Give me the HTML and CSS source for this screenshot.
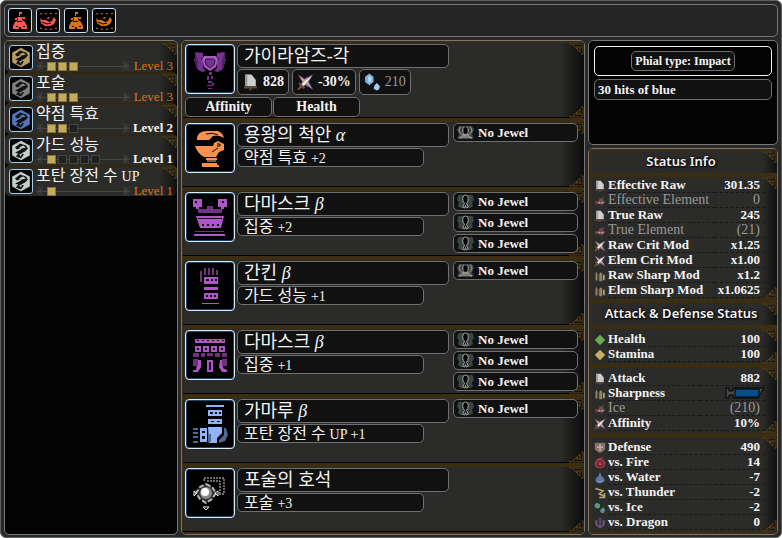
FILE: index.html
```html
<!DOCTYPE html>
<html lang="ko">
<head>
  <meta charset="UTF-8">
  <meta name="viewport" content="width=device-width, initial-scale=1.0">
  <title>Set Builder</title>
  <link rel="stylesheet" href="styles.css">
</head>
<body>
  <svg class="sprites" width="0" height="0" aria-hidden="true">
    <symbol id="demondrug" viewBox="0 0 22 22"><path d="M10 2h3v2h-2v2h-1zM8 7h6l-1 3 3 2 2 4v3H4v-3l2-4 3-2zM6 8h2v2H6zM14 7h2v2h-2z"/><path d="M7 16h2v1H7zM10 17h2v2h-2zM14 16h2v1h-2zM8 11h5v1H8z" fill="#000"/></symbol>
    <symbol id="powder" viewBox="0 0 22 22"><path d="M3 8l2 2h4l3 2 3-1 2-4 2 3-2 4-4 2H8l-4-3zM3 3h2l-1 2zM8 3h2L9 5zM13 3h2l-1 2zM18 3h2l-1 2zM3 19l1-2 1 2zM8 20l1-2 1 2zM13 20l1-2 1 2zM18 19l1-2 1 2zM9 8l4-1-1 2z"/><path d="M5 12l5 2 4-1" fill="none" stroke="#000"/></symbol>
    <symbol id="gem" viewBox="0 0 22 22"><path d="M11 1l9 5v10l-9 5-9-5V6z"/><path d="M5 8l5-4 6 2 2 3-3 3-4 2 3 1-3 4-5-2 2-3-3-1 6-3 1-2-5 2z" fill="#11110f"/><path d="M9 8l4-2 3 2-4 1zM9 15l3-1-1 3z"/><path d="M11 1l9 5v10l-9 5-9-5V6z" fill="none" stroke="#000" stroke-opacity=".4"/></symbol>
    <symbol id="cap" viewBox="0 0 8 10"><path d="M6 0v3H4V1L1 5l3 4V7h2v3M2 5h6M1 1h1M1 9h1" fill="none" stroke="#3e3f3c"/><path d="M5 3L2 5l3 2z" fill="#4a4b47"/></symbol>
    <symbol id="corner" viewBox="0 0 16 13"><path d="M1 1h14v10h-2M5 2l7 7V4H8l2 2M14 4h-2" fill="none" stroke="#5a4213"/></symbol>
    <symbol id="raw" viewBox="0 0 16 16"><path d="M3 1h6l4 5v6H3z" fill="#cccdcd"/><path d="M3 1h2v11H3z" fill="#949799"/><path d="M2 12h12v2H9v2H7v-2H2z" fill="#60483a"/></symbol>
    <symbol id="element" viewBox="0 0 16 16"><path d="M1 9l5-1 2-4 2 1 3-3-1 5 3 2-3 4-5 2-5-2z" fill="#724b4c"/><path d="M5 9l4 1 5-1-3 3-4 1z" fill="#b29998"/><path d="M1 11l5 1 5-1-3 4-5-1z" fill="#38272a"/></symbol>
    <symbol id="crit" viewBox="0 0 16 16"><path d="M1 1l6 4 8-4-4 7 4 7-7-4-7 4 4-7z" fill="#9676ac"/><path d="M3 3l4 3 5-2-2 4 3 4-5-3-4 2 2-3z" fill="#c5b779"/><path d="M14 2L6 12 4 10z" fill="#f1f0ee"/><path d="M2 9l5 5M1 15l4-4" stroke="#765039" stroke-width="2"/></symbol>
    <symbol id="sharp" viewBox="0 0 16 16"><path d="M2 5l2-3v12H2zM7 5l2-2 2 2v10H7z" fill="#958365"/><path d="M4 4l2 2v8H4zM12 6l2-1 1 2v7h-3z" fill="#5b503d"/><path d="M12 7h2v6h-2z" fill="#b9a98a"/></symbol>
    <symbol id="ice" viewBox="0 0 16 16"><path d="M5 0l4 3v5l-4 3-4-3V3z" fill="#7faddb"/><path d="M5 2l2 2v3l-2 2-1-2V4z" fill="#b9dbf7"/><path d="M12 9l3 3-1 3-2 1-3-2 1-3z" fill="#a2cef3"/></symbol>
    <symbol id="slot1" viewBox="0 0 20 16"><path d="M2 2q1-2 4-1h8q3-1 4 1l1 4-2 3 1 4-3 2H5l-3-2 1-4-2-3z" fill="#3b4442"/><path d="M10 1q-3 0-3 4 0 3 2 5l-2 4 2 1 1-3 1 3 2-1-2-4q2-2 2-5 0-4-3-4z" fill="#050505" stroke="#a7aaa3"/></symbol>
    <symbol id="slot4" viewBox="0 0 20 16"><path d="M3 1h14l2 4-2 5 2 4-3 1H4l-3-1 2-4-2-5z" fill="#454746"/><path d="M5 2Q1 6 6 10h8q5-4 1-8M8 2Q6 6 8 10M12 2q2 4 0 8" fill="none" stroke="#a0a19d"/><path d="M8 3h4v6H8z" fill="#070707"/><path d="M3 14l4-3h6l4 3-4-1H7z" fill="#777a77" stroke="#999"/></symbol>
  </svg>

  <div class="builder">
    <div class="buffs">
      <button class="buff red" aria-label="Demondrug"><svg><use href="#demondrug"/></svg></button>
      <button class="buff red" aria-label="Demon Powder"><svg><use href="#powder"/></svg></button>
      <button class="buff orange" aria-label="Armorskin"><svg><use href="#demondrug"/></svg></button>
      <button class="buff orange" aria-label="Hardshell Powder"><svg><use href="#powder"/></svg></button>
    </div>

    <div class="columns">
      <!-- Skills -->
      <section class="panel skills">
        <div class="skill">
          <svg class="corner top"><use href="#corner"/></svg>
          <span class="skill-icon tan"><svg><use href="#gem"/></svg></span>
          <div class="skill-body">
            <div class="skill-name">집중</div>
            <div class="skill-level">
              <div class="track"><svg class="cap"><use href="#cap"/></svg><i class="pip on"></i><i class="pip on"></i><i class="pip on"></i><svg class="cap end"><use href="#cap"/></svg></div>
              <span class="level max">Level 3</span>
            </div>
          </div>
        </div>
        <div class="skill">
          <svg class="corner top"><use href="#corner"/></svg>
          <span class="skill-icon gray"><svg><use href="#gem"/></svg></span>
          <div class="skill-body">
            <div class="skill-name">포술</div>
            <div class="skill-level">
              <div class="track"><svg class="cap"><use href="#cap"/></svg><i class="pip on"></i><i class="pip on"></i><i class="pip on"></i><svg class="cap end"><use href="#cap"/></svg></div>
              <span class="level max">Level 3</span>
            </div>
          </div>
        </div>
        <div class="skill">
          <svg class="corner top"><use href="#corner"/></svg>
          <span class="skill-icon blue"><svg><use href="#gem"/></svg></span>
          <div class="skill-body">
            <div class="skill-name">약점 특효</div>
            <div class="skill-level">
              <div class="track"><svg class="cap"><use href="#cap"/></svg><i class="pip on"></i><i class="pip on"></i><i class="pip"></i><svg class="cap end"><use href="#cap"/></svg></div>
              <span class="level">Level 2</span>
            </div>
          </div>
        </div>
        <div class="skill">
          <svg class="corner top"><use href="#corner"/></svg>
          <span class="skill-icon pale"><svg><use href="#gem"/></svg></span>
          <div class="skill-body">
            <div class="skill-name">가드 성능</div>
            <div class="skill-level">
              <div class="track"><svg class="cap"><use href="#cap"/></svg><i class="pip on"></i><i class="pip"></i><i class="pip"></i><i class="pip"></i><i class="pip"></i><svg class="cap end"><use href="#cap"/></svg></div>
              <span class="level">Level 1</span>
            </div>
          </div>
        </div>
        <div class="skill">
          <svg class="corner top"><use href="#corner"/></svg>
          <span class="skill-icon pale"><svg><use href="#gem"/></svg></span>
          <div class="skill-body">
            <div class="skill-name">포탄 장전 수 <small>UP</small></div>
            <div class="skill-level">
              <div class="track"><svg class="cap"><use href="#cap"/></svg><i class="pip on"></i><svg class="cap end"><use href="#cap"/></svg></div>
              <span class="level max">Level 1</span>
            </div>
          </div>
        </div>
      </section>

      <!-- Equipment -->
      <section class="panel gear">
        <div class="item weapon">
          <svg class="corner top"><use href="#corner"/></svg>
          <svg class="corner bottom"><use href="#corner"/></svg>
          <div class="item-main">
            <span class="item-icon purple"><svg viewBox="0 0 48 48"><path d="M9 7l8 1v4l-2 2 2 2v7l3 3-4 1-5-3-3-10 2-1zM39 7l-8 1v4l2 2-2 2v7l-3 3 4 1 5-3 3-10-2-1z" fill="#75318f"/><path d="M9 7l3 9v9l-3-7zM39 7l-3 9v9l3-7z" fill="#4d205f"/><path d="M18 11h12l2 3-2 8-6 4-6-4-2-8z"/><path d="M20 14h8l1 2-1 4-4 3-4-3-1-4z" fill="#71358b" stroke="#37133f"/><path d="M23 27h3v3h-3zM21 31h2v4h-2zM25 31h2v3h-2zM22 36h4v2h-4zM26 38h2v2h-2zM21 40h6v1h-6zM22 43h4v1h-4z" fill="#713283"/></svg></span>
            <div class="item-info">
              <button class="box name">가이라암즈-각</button>
              <div class="weapon-stats">
                <span class="box stat"><svg><use href="#raw"/></svg>828</span>
                <span class="box stat"><svg><use href="#crit"/></svg>-30%</span>
                <span class="box stat dim"><svg><use href="#ice"/></svg>210</span>
              </div>
            </div>
          </div>
          <div class="augments">
            <button class="box augment">Affinity</button>
            <button class="box augment">Health</button>
          </div>
        </div>

        <div class="item">
          <svg class="corner top"><use href="#corner"/></svg>
          <svg class="corner bottom"><use href="#corner"/></svg>
          <div class="item-main">
            <span class="item-icon orange"><svg viewBox="0 0 48 48"><path d="M11 14q1-7 10-7h11q5 2 6 7-5-3-11-2l-4 4H11z"/><path d="M9 22h18l1-3 4-2 6 3v6l-5 2-3 5H18q-7-4-9-11z"/><path d="M20 10q7-2 12 1M31 20h3v2h-3M26 28l6-4" fill="none" stroke="#060302"/><path d="M20 34h11v2H20zM16 39h15v2h2v2H16z"/><path d="M21 36h9v2h-9z" fill="#8c5430"/></svg></span>
            <div class="item-info">
              <button class="box name">용왕의 척안 <i>α</i></button>
              <div class="box bonus">약점 특효 <small>+2</small></div>
            </div>
            <div class="jewels">
              <button class="box jewel"><svg><use href="#slot4"/></svg>No Jewel</button>
            </div>
          </div>
        </div>

        <div class="item">
          <svg class="corner top"><use href="#corner"/></svg>
          <svg class="corner bottom"><use href="#corner"/></svg>
          <div class="item-main">
            <span class="item-icon purple"><svg viewBox="0 0 48 48"><path d="M7 6h9v8h-3v2h-3v-2H7zM32 6h9v8h-3v2h-3v-2h-3zM10 23h28l-3 12H14zM8 41h31v2H8z"/><path d="M12 16h9v-3h6v3h9v4H12zM9 38h29v1H9z" fill="#703284"/><path d="M9 8h2v2H9zM36 8h2v2h-2zM16 31h2v2h-2zM21 31h2v2h-2zM26 31h2v2h-2zM31 31h2v2h-2zM12 25h24v1H12z" fill="#160a1a"/></svg></span>
            <div class="item-info">
              <button class="box name">다마스크 <i>β</i></button>
              <div class="box bonus">집중 <small>+2</small></div>
            </div>
            <div class="jewels">
              <button class="box jewel"><svg><use href="#slot1"/></svg>No Jewel</button>
              <button class="box jewel"><svg><use href="#slot1"/></svg>No Jewel</button>
              <button class="box jewel"><svg><use href="#slot1"/></svg>No Jewel</button>
            </div>
          </div>
        </div>

        <div class="item">
          <svg class="corner top"><use href="#corner"/></svg>
          <svg class="corner bottom"><use href="#corner"/></svg>
          <div class="item-main">
            <span class="item-icon purple"><svg viewBox="0 0 48 48"><path d="M14 9h2v11h-2zM18 6h2v7h-2zM22 6h2v7h-2zM26 6h2v7h-2zM30 8h2v5h-2z" fill="#6c347b"/><path d="M18 15h14v7H18zM18 25h14v3H18zM18 31h14v6H18zM16 41h17v1H16z"/><path d="M20 17h3v2h-3zM25 17h2v2h-2zM29 17h2v2h-2zM20 33h2v2h-2zM24 33h2v2h-2zM28 33h2v2h-2z" fill="#16091b"/></svg></span>
            <div class="item-info">
              <button class="box name">간킨 <i>β</i></button>
              <div class="box bonus">가드 성능 <small>+1</small></div>
            </div>
            <div class="jewels">
              <button class="box jewel"><svg><use href="#slot4"/></svg>No Jewel</button>
            </div>
          </div>
        </div>

        <div class="item">
          <svg class="corner top"><use href="#corner"/></svg>
          <svg class="corner bottom"><use href="#corner"/></svg>
          <div class="item-main">
            <span class="item-icon purple"><svg viewBox="0 0 48 48"><path d="M9 8h30v4H9zM9 15h6v6H9zM17 15h6v6h-6zM25 15h6v6h-6zM33 15h6v6h-6zM21 29h6v12h-6zM12 29h3v7l-3 5H7v-2h3zM34 29h3v8l4 2v2h-5l-3-5z"/><path d="M7 22h6v4H7zM15 22h4v4h-4zM21 22h6v3h-6zM29 22h5v4h-5zM36 22h5v4h-5zM7 28h5v7H7zM36 28h5v7h-5z" fill="#70327d"/><path d="M11 9h2v1h-2zM16 9h2v1h-2zM21 9h2v1h-2zM26 9h2v1h-2zM31 9h2v1h-2zM36 9h2v1h-2zM11 17h2v2h-2zM19 17h2v2h-2zM27 17h2v2h-2zM35 17h2v2h-2zM23 31h2v8h-2z" fill="#150719"/></svg></span>
            <div class="item-info">
              <button class="box name">다마스크 <i>β</i></button>
              <div class="box bonus">집중 <small>+1</small></div>
            </div>
            <div class="jewels">
              <button class="box jewel"><svg><use href="#slot1"/></svg>No Jewel</button>
              <button class="box jewel"><svg><use href="#slot1"/></svg>No Jewel</button>
              <button class="box jewel"><svg><use href="#slot1"/></svg>No Jewel</button>
            </div>
          </div>
        </div>

        <div class="item">
          <svg class="corner top"><use href="#corner"/></svg>
          <svg class="corner bottom"><use href="#corner"/></svg>
          <div class="item-main">
            <span class="item-icon ice"><svg viewBox="0 0 48 48"><path d="M20 5h18v2H20zM22 10h14v6H22zM22 19h14v5H22zM22 27h14v6l-5 5v5h-8zM14 28h7v14h-7z"/><path d="M7 28h5v2H7zM7 32h5v2H7zM7 36h5v2H7zM7 41h5v2H7zM38 28h2l2 7-3 6-6 2v-3l5-5zM22 34h3v8h-3z" fill="#536894"/><path d="M24 12h3v2h-3zM29 12h2v2h-2zM33 12h2v2h-2zM25 21h3v1h-3zM31 21h3v1h-3zM16 31h3v2h-3zM16 36h3v3h-3z" fill="#08101b"/></svg></span>
            <div class="item-info">
              <button class="box name">가마루 <i>β</i></button>
              <div class="box bonus">포탄 장전 수 <small>UP +1</small></div>
            </div>
            <div class="jewels">
              <button class="box jewel"><svg><use href="#slot1"/></svg>No Jewel</button>
            </div>
          </div>
        </div>

        <div class="item">
          <svg class="corner top"><use href="#corner"/></svg>
          <svg class="corner bottom"><use href="#corner"/></svg>
          <div class="item-main">
            <span class="item-icon white"><svg viewBox="0 0 48 48"><path d="M18 12V9h20v16h-5M21 12h13v12" fill="none" stroke="#d5d5d2" stroke-dasharray="2 1"/><path d="M20 15l6 3 4 6-4 6-6 4-6-4-4-6 4-6z" fill="#30302f" stroke="#b5b5b1" stroke-width="2" stroke-dasharray="5 2"/><circle cx="20" cy="24" r="6" fill="#8b8b89"/><circle cx="19" cy="23" r="4"/><path d="M8 22l3 2-3 3zM32 22l-3 2 3 3zM17 38h6l-3 3z" fill="none" stroke="#eee"/></svg></span>
            <div class="item-info">
              <button class="box name">포술의 호석</button>
              <div class="box bonus">포술 <small>+3</small></div>
            </div>
          </div>
        </div>
      </section>

      <!-- Weapon details and stats -->
      <div class="side">
        <section class="panel details">
          <div class="phial"><span class="box phial-type">Phial type: Impact</span></div>
          <div class="box hits">30 hits of blue</div>
        </section>

        <section class="panel status">
          <h2 class="block">Status Info<svg class="corner top"><use href="#corner"/></svg></h2>
          <div class="block tight">
            <svg class="corner top"><use href="#corner"/></svg>
            <svg class="corner bottom"><use href="#corner"/></svg>
            <table>
              <tr><td><svg><use href="#raw"/></svg></td><th scope="row">Effective Raw</th><td>301.35</td></tr>
              <tr class="dim"><td><svg><use href="#element"/></svg></td><th scope="row">Effective Element</th><td>0</td></tr>
              <tr><td><svg><use href="#raw"/></svg></td><th scope="row">True Raw</th><td>245</td></tr>
              <tr class="dim"><td><svg><use href="#element"/></svg></td><th scope="row">True Element</th><td>(21)</td></tr>
              <tr><td><svg><use href="#crit"/></svg></td><th scope="row">Raw Crit Mod</th><td>x1.25</td></tr>
              <tr><td><svg><use href="#crit"/></svg></td><th scope="row">Elem Crit Mod</th><td>x1.00</td></tr>
              <tr><td><svg><use href="#sharp"/></svg></td><th scope="row">Raw Sharp Mod</th><td>x1.2</td></tr>
              <tr><td><svg><use href="#sharp"/></svg></td><th scope="row">Elem Sharp Mod</th><td>x1.0625</td></tr>
            </table>
          </div>
          <h2 class="block">Attack &amp; Defense Status<svg class="corner top"><use href="#corner"/></svg></h2>
          <div class="block">
            <svg class="corner top"><use href="#corner"/></svg>
            <svg class="corner bottom"><use href="#corner"/></svg>
            <table>
              <tr><td><svg viewBox="0 0 16 16"><path d="M8 1l7 7-7 7-7-7z" fill="#6eac52"/></svg></td><th scope="row">Health</th><td>100</td></tr>
              <tr><td><svg viewBox="0 0 16 16"><path d="M8 1l7 7-7 7-7-7z" fill="#c7ac62"/></svg></td><th scope="row">Stamina</th><td>100</td></tr>
            </table>
          </div>
          <div class="block">
            <svg class="corner top"><use href="#corner"/></svg>
            <svg class="corner bottom"><use href="#corner"/></svg>
            <table>
              <tr><td><svg><use href="#raw"/></svg></td><th scope="row">Attack</th><td>882</td></tr>
              <tr><td><svg><use href="#sharp"/></svg></td><th scope="row">Sharpness</th><td class="gauge"><svg viewBox="0 0 40 12"><path d="M1 1h3v3h4V1h31l-6 10H8V8H4v3H1z" fill="#454745" stroke="#000"/><path d="M10 2h24v8H10z" fill="#064d8c" stroke="#000"/></svg></td></tr>
              <tr class="dim"><td><svg><use href="#element"/></svg></td><th scope="row">Ice</th><td>(210)</td></tr>
              <tr><td><svg><use href="#crit"/></svg></td><th scope="row">Affinity</th><td>10%</td></tr>
            </table>
          </div>
          <div class="block">
            <svg class="corner top"><use href="#corner"/></svg>
            <svg class="corner bottom"><use href="#corner"/></svg>
            <table>
              <tr><td><svg viewBox="0 0 16 16"><path d="M1 1h14v9l-7 5-7-5z" fill="#87716a"/><path d="M7 3h2v3h3v2H9v4H7V8H4V6h3z" fill="#c1afa4"/></svg></td><th scope="row">Defense</th><td>490</td></tr>
              <tr><td><svg viewBox="0 0 16 16"><path d="M5 2l8-2-3 3q5 1 5 6t-6 6-8-5q0-5 4-8z" fill="#a63d49"/><path d="M12 7Q9 4 6 6t-1 5 6 1-1-4" fill="none" stroke="#63262e" stroke-width="2"/></svg></td><th scope="row">vs. Fire</th><td>14</td></tr>
              <tr><td><svg viewBox="0 0 16 16"><path d="M8 0q1 5 6 9-1 6-6 6t-6-6q5-4 6-9z" fill="#5579a0"/><path d="M2 11q3 4 6 2t6-1" fill="none" stroke="#8aa9c1"/></svg></td><th scope="row">vs. Water</th><td>-7</td></tr>
              <tr><td><svg viewBox="0 0 16 16"><path d="M2 2l10 3-5 4 6 3M7 14h7V8" fill="none" stroke="#b6aa72" stroke-width="2"/></svg></td><th scope="row">vs. Thunder</th><td>-2</td></tr>
              <tr><td><svg viewBox="0 0 16 16"><path d="M4 1l4 2v4L5 9 1 7V3zM12 7l3 3-2 5-4-1-1-3z" fill="#579389"/></svg></td><th scope="row">vs. Ice</th><td>-2</td></tr>
              <tr><td><svg viewBox="0 0 16 16"><path d="M7 1h2v10h2V3l2 2 2-1-1 7-5 4H7l-5-4-1-7 2 1 2-2v8h2z" fill="#655078"/></svg></td><th scope="row">vs. Dragon</th><td>0</td></tr>
            </table>
          </div>
        </section>
      </div>
    </div>
  </div>
</body>
</html>
```
FILE: styles.css
```css
* {
  box-sizing: border-box;
}

body {
  margin: 0;
  font-family: "Liberation Serif", "Noto Sans CJK KR", serif;
  font-size: 13px;
  color: #f4f4f4;
  background-color: #fff;
}

button {
  font-family: inherit;
  color: inherit;
  text-align: left;
  cursor: pointer;
}

svg {
  display: block;
  flex: none;
}

.sprites {
  position: absolute;
}

.builder {
  display: flex;
  flex-direction: column;
  gap: 3px;
  min-height: 100vh;
  padding: 3px 3px 2px;
  border: 1px solid #5c5f5d;
  border-radius: 6px;
  background-color: #292929;
}

/* Buffs */
.buffs {
  display: flex;
  gap: 4px;
  padding: 3px;
  border: 1px solid #777;
  border-radius: 5px;
  background-color: #252525;
}

.buff {
  width: 24px;
  height: 25px;
  padding: 0;
  border: 1px solid #c5dff1;
  border-radius: 3px;
  background-color: #000;
}

.buff svg {
  width: 22px;
  height: 22px;
}

.red {
  fill: #fb5556;
}

.orange {
  fill: #f9914e;
}

.buff.orange {
  fill: #dc7508;
}

.columns {
  flex: 1;
  display: grid;
  grid-template-columns: 174px minmax(0, 1fr) 190px;
  gap: 3px;
}

.panel {
  border: 1px solid #777;
  border-radius: 5px;
  background-color: #030303;
  overflow: hidden;
}

.corner {
  position: absolute;
  right: 0;
  width: 16px;
  height: 13px;
}

.corner.top {
  top: 0;
}

.corner.bottom {
  bottom: 0;
  transform: scaleY(-1);
}

/* Skills */
.skill {
  position: relative;
  display: flex;
  gap: 3px;
  height: 31px;
  padding: 0 4px;
  border-top: 2px solid #35270f;
  border-radius: 5px;
  background: linear-gradient(to right, #2b2b29 90%, #101010);
}

.skill-icon {
  flex: none;
  width: 24px;
  height: 25px;
  margin-top: 2px;
  border: 1px solid #a9cbe3;
  border-radius: 3px;
  background-color: #030507;
}

.skill-icon svg {
  width: 22px;
  height: 23px;
}

.tan {
  fill: #b79c63;
}

.gray {
  fill: #83807f;
}

.blue {
  fill: #5377bf;
}

.pale {
  fill: #c3d0cd;
}

.skill-body {
  flex: 1;
}

.skill-name {
  font-size: 16px;
  line-height: 17px;
  white-space: nowrap;
}

small {
  font-size: 14px;
}

.skill-level {
  position: relative;
  z-index: 1;
  display: flex;
  align-items: center;
  justify-content: space-between;
  height: 12px;
}

.track {
  display: flex;
  align-items: center;
  gap: 2px;
  width: 94px;
  background: linear-gradient(#454541, #454541) center / 100% 1px no-repeat;
}

.cap {
  width: 8px;
  height: 10px;
  margin-right: 1px;
}

.cap.end {
  margin: 0 0 0 auto;
  transform: scaleX(-1);
}

.pip {
  width: 9px;
  height: 9px;
  border: 1px solid #444;
  background-color: #20201f;
}

.pip.on {
  border-color: #8a763b;
  background-color: #c3aa5d;
}

.level {
  font-weight: bold;
  line-height: 12px;
  white-space: nowrap;
}

.level.max {
  font-weight: normal;
  color: #d8741c;
}

/* Equipment */
.box {
  border: 1px solid #6f6f6f;
  border-radius: 5px;
  background-color: #111;
}

.item {
  position: relative;
  min-height: 69px;
  padding: 1px 6px 1px 2px;
  border: 2px solid #3d2d10;
  border-width: 2px 0 2px 1px;
  box-shadow: inset 0 -1px #000;
  background: linear-gradient(to right, #2b2b29 94%, #0c0c0c);
}

.item-main {
  position: relative;
  display: flex;
  gap: 2px;
}

.item-icon {
  flex: none;
  width: 50px;
  height: 50px;
  border: 1px solid #d9eefa;
  border-radius: 4px;
  box-shadow: inset 0 0 0 1px #164572;
  background-color: #000;
}

.item-icon svg {
  width: 48px;
  height: 48px;
}

.purple {
  fill: #ad56c5;
}

.ice {
  fill: #91b3fa;
}

.white {
  fill: #fff;
}

.item-info {
  flex: 0 1 212px;
  display: flex;
  flex-direction: column;
  gap: 1px;
}

.name {
  height: 24px;
  padding: 0 6px;
  font-size: 18px;
  line-height: 22px;
  white-space: nowrap;
}

.bonus {
  width: 88%;
  height: 19px;
  padding: 0 6px;
  font-size: 16px;
  line-height: 17px;
  white-space: nowrap;
}

.weapon-stats {
  display: flex;
  gap: 3px;
}

.stat {
  display: flex;
  align-items: center;
  gap: 4px;
  height: 26px;
  padding: 0 4px;
  font-size: 14px;
  font-weight: bold;
}

.stat svg {
  width: 17px;
  height: 18px;
}

.dim {
  color: #999;
}

.stat.dim {
  font-weight: normal;
}

.augments {
  display: flex;
  gap: 1px;
  margin-top: 2px;
}

.augment {
  width: 87px;
  height: 20px;
  padding: 0;
  font-size: 14px;
  font-weight: bold;
  line-height: 18px;
  text-align: center;
}

.jewels {
  display: flex;
  flex-direction: column;
  gap: 2px;
  width: 125px;
  margin-left: auto;
}

.jewel {
  display: flex;
  align-items: center;
  gap: 3px;
  height: 19px;
  padding: 0 2px;
  font-size: 13px;
  font-weight: bold;
}

.jewel svg {
  width: 19px;
  height: 15px;
}

/* Details */
.side {
  display: flex;
  flex-direction: column;
  gap: 3px;
}

.details {
  display: flex;
  flex-direction: column;
  gap: 3px;
  min-height: 105px;
  padding: 5px;
}

.phial {
  display: flex;
  justify-content: center;
  padding: 4px;
  border: 1px solid #f2f2f2;
  border-radius: 5px;
}

.phial-type {
  padding: 0 3px;
  font-size: 12px;
  font-weight: bold;
  line-height: 18px;
}

.hits {
  padding: 0 3px;
  font-weight: bold;
  line-height: 19px;
}

/* Status */
.status {
  flex: 1;
}

.block {
  position: relative;
  padding: 3px 12px 2px 3px;
  border: 2px solid #3d2d10;
  border-width: 2px 0 2px 2px;
  background: linear-gradient(to right, #2b2b29 92%, #101010);
}

.block.tight {
  padding: 1px 12px 1px 3px;
}

h2.block {
  height: 26px;
  margin: 0;
  padding: 0 6px 0 0;
  font-family: "Noto Sans", "Open Sans", sans-serif;
  font-size: 13px;
  font-weight: 600;
  line-height: 21px;
  text-align: center;
  text-shadow: 0 0 3px #000, 1px 1px 2px #000;
}

table {
  position: relative;
  width: 100%;
  border-spacing: 0;
}

th,
td {
  height: 15px;
  padding: 0;
  border-bottom: 1px dashed #191919;
  line-height: 14px;
  font-weight: bold;
  text-align: left;
  white-space: nowrap;
}

.dim th,
.dim td {
  font-size: 14px;
  font-weight: normal;
}

td:first-child {
  width: 14px;
  border-bottom: 0;
}

td:first-child svg {
  width: 12px;
  height: 12px;
}

td:last-child {
  padding-right: 5px;
  text-align: right;
}

td.gauge {
  padding-right: 0;
}

.gauge svg {
  width: 40px;
  height: 12px;
  margin-left: auto;
}
```
